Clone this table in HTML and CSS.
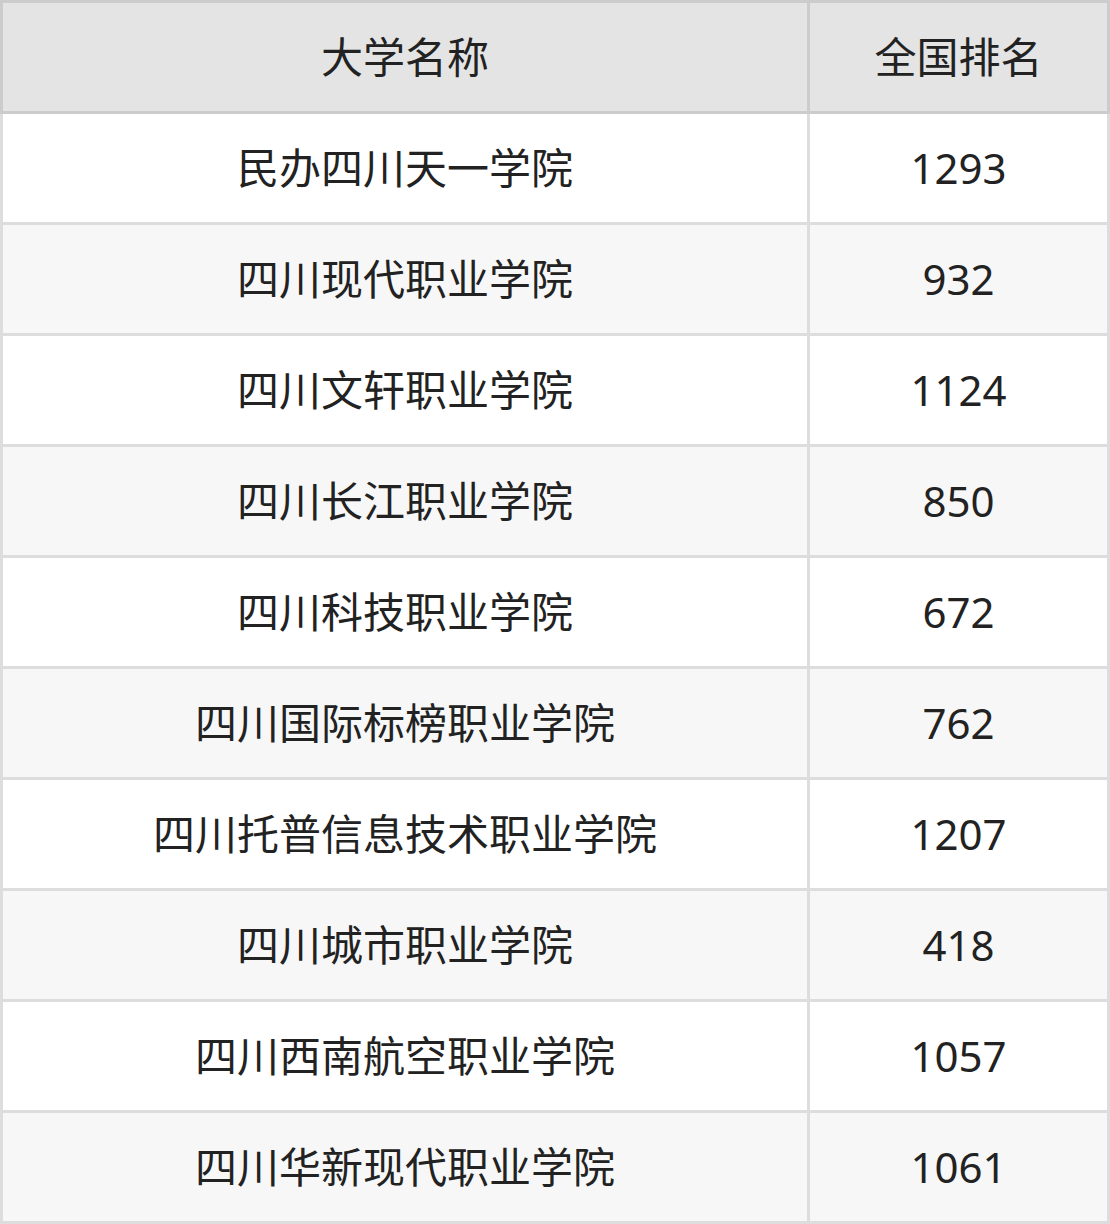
FILE: index.html
```html
<!DOCTYPE html>
<html lang="zh">
<head>
<meta charset="utf-8">
<link rel="stylesheet" href="styles.css">
</head>
<body>
<table class="rank">
  <colgroup><col class="c1"><col class="c2"></colgroup>
  <thead>
    <tr><th>大学名称</th><th>全国排名</th></tr>
  </thead>
  <tbody>
    <tr><td>民办四川天一学院</td><td>1293</td></tr>
    <tr><td>四川现代职业学院</td><td>932</td></tr>
    <tr><td>四川文轩职业学院</td><td>1124</td></tr>
    <tr><td>四川长江职业学院</td><td>850</td></tr>
    <tr><td>四川科技职业学院</td><td>672</td></tr>
    <tr><td>四川国际标榜职业学院</td><td>762</td></tr>
    <tr><td>四川托普信息技术职业学院</td><td>1207</td></tr>
    <tr><td>四川城市职业学院</td><td>418</td></tr>
    <tr><td>四川西南航空职业学院</td><td>1057</td></tr>
    <tr><td>四川华新现代职业学院</td><td>1061</td></tr>
  </tbody>
</table>
</body>
</html>
```

FILE: styles.css
```css
html, body {
  margin: 0;
  padding: 0;
  background: #ffffff;
}
.rank {
  width: 1110px;
  table-layout: fixed;
  border-collapse: separate;
  border-spacing: 0;
  font-family: "Noto Sans", "Noto Sans CJK SC", sans-serif;
  font-size: 42px;
  color: #222222;
}
.c1 { width: 810px; }
.c2 { width: 300px; }
.rank th,
.rank td {
  padding: 0;
  text-align: center;
  vertical-align: middle;
  line-height: 1;
  font-weight: normal;
}
.rank th {
  height: 108px;
  background: #e4e4e4;
  border-top: 3px solid #cccccc;
  border-bottom: 3px solid #cccccc;
  border-right: 3px solid #cccccc;
}
.rank th:first-child {
  border-left: 3px solid #cccccc;
}
.rank td {
  height: 108px;
  border-bottom: 3px solid #dddddd;
  border-right: 3px solid #dddddd;
}
.rank td:first-child {
  border-left: 3px solid #dddddd;
}
.rank tbody tr:nth-child(even) td {
  background: #f7f7f7;
}
```
